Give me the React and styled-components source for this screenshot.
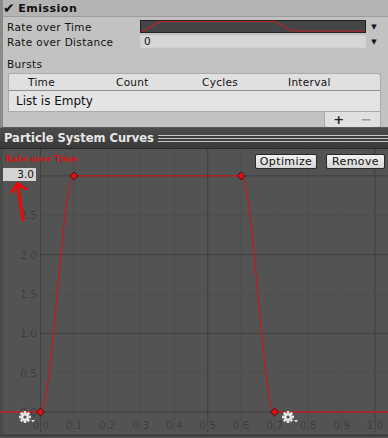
import React from 'react';
import styled, { createGlobalStyle } from 'styled-components';

const GlobalStyle = createGlobalStyle`
  html, body {
    margin: 0;
    padding: 0;
    background: #525252;
  }
  body {
    font-family: 'DejaVu Sans', Verdana, sans-serif;
    width: 388px;
    height: 438px;
    overflow: hidden;
  }
`;

const Inspector = styled.div`
  height: 127px;
  overflow: hidden;
  background: #c2c2c2;
  border-left: 3px solid #8a8a8a;
  border-bottom: 1px solid #5a5a5a;
  box-sizing: content-box;
  display: flex;
  flex-direction: column;
`;

const ModuleHeader = styled.div`
  height: 16px;
  flex-shrink: 0;
  display: flex;
  align-items: center;
  gap: 3px;
  padding-left: 0;
  background: #b4b4b4;
  border-bottom: 1px solid #9c9c9c;
  font-size: 11px;
  font-weight: bold;
  letter-spacing: 0.5px;
  color: #111;
`;

const Check = styled.span`
  font-size: 14px;
  line-height: 1;
`;

const Row = styled.div`
  height: 15px;
  flex-shrink: 0;
  display: flex;
  align-items: center;
  padding-left: 4px;
  font-size: 10.5px;
  color: #111;
  letter-spacing: 0.35px;
  margin-top: ${(p) => p.$top || 0}px;
`;

const Label = styled.div`
  width: 133px;
  white-space: nowrap;
`;

const Field = styled.div`
  width: 226px;
  height: 13px;
  box-sizing: border-box;
  background: ${(p) => (p.$dark ? '#434546' : '#d6d6d6')};
  border: 1px solid ${(p) => (p.$dark ? '#222' : '#d0d0d0')};
  font-size: 10.5px;
  line-height: 11px;
  padding-left: 3px;
  position: relative;
  overflow: hidden;
`;

const Arrow = styled.div`
  width: 16px;
  text-align: center;
  font-size: 7px;
  color: #111;
`;

const BurstsLabel = styled.div`
  flex-shrink: 0;
  font-size: 10.5px;
  line-height: 10px;
  color: #111;
  padding: 10px 0 0 4px;
  height: 10px;
  letter-spacing: 0.35px;
`;

const Table = styled.div`
  margin: 4px 7px 0 5px;
  display: flex;
  flex-direction: column;
`;

const TableHeader = styled.div`
  height: 16px;
  display: grid;
  grid-template-columns: 19px 88px 86px 86px 1fr;
  align-items: center;
  background: #e0e0e0;
  border: 1px solid #ababab;
  border-bottom: 1px solid #8f8f8f;
  border-radius: 3px 3px 0 0;
  font-size: 10.5px;
  color: #111;
  letter-spacing: 0.3px;
`;

const TableBody = styled.div`
  height: 20px;
  display: flex;
  align-items: center;
  padding-left: 7px;
  background: #e4e4e4;
  border: 1px solid #ababab;
  border-top: none;
  font-size: 12px;
  color: #111;
`;

const Footer = styled.div`
  display: flex;
  justify-content: flex-end;
`;

const FooterBox = styled.div`
  width: 55px;
  height: 15px;
  display: flex;
  align-items: center;
  justify-content: space-around;
  background: #e0e0e0;
  border: 1px solid #ababab;
  border-top: none;
  border-radius: 0 0 3px 3px;
  font-size: 13px;
  font-weight: bold;
`;

const Sign = styled.span`
  color: ${(p) => p.$color};
  line-height: 1;
`;

const TitleBar = styled.div`
  height: 20px;
  display: flex;
  align-items: center;
  gap: 4px;
  padding-left: 4px;
  background: linear-gradient(#4c4c4c, #3a3a3a);
  border-bottom: 1px solid #262626;
  font-size: 11.5px;
  font-weight: bold;
  color: #e8e8e8;
  letter-spacing: 0;
`;

const Grip = styled.div`
  flex: 1;
  height: 7px;
  background: repeating-linear-gradient(
    #c8c8c8 0px,
    #c8c8c8 1px,
    #3e3e3e 1px,
    #3e3e3e 3px
  );
`;

const Graph = styled.div`
  position: relative;
  height: 289px;
  background: #535353;
`;

const Plot = styled.svg`
  position: absolute;
  inset: 0;
  display: block;
`;

const CurveName = styled.div`
  position: absolute;
  left: 5px;
  top: 5px;
  font-size: 8.5px;
  font-weight: bold;
  color: #d01818;
`;

const ValueBox = styled.div`
  position: absolute;
  left: 3px;
  top: 19px;
  width: 33px;
  height: 13px;
  box-sizing: border-box;
  background: #d4d4d4;
  font-size: 10.5px;
  line-height: 13px;
  text-align: right;
  padding-right: 2px;
  color: #111;
`;

const Buttons = styled.div`
  position: absolute;
  right: 3px;
  top: 5px;
  display: flex;
  gap: 9px;
`;

const Button = styled.div`
  width: ${(p) => p.$w}px;
  height: 15px;
  box-sizing: border-box;
  background: linear-gradient(#f2f2f2, #d6d6d6);
  border: 1px solid #2a2a2a;
  border-radius: 2px;
  font-size: 11px;
  line-height: 13px;
  text-align: center;
  color: #111;
  letter-spacing: 0.4px;
`;

const X0 = 40.5;
const XS = 334.5;
const Y0 = 411;
const YS = 78.7;
const px = (v) => X0 + v * XS;
const py = (v) => Y0 - v * YS;

const Gear = ({ x, y }) => (
  <g transform={`translate(${x} ${y})`} fill="#e4e4e4">
    <circle r="4" />
    {[0, 45, 90, 135, 180, 225, 270, 315].map((a) => (
      <rect key={a} x="-1.3" y="-6" width="2.6" height="3" transform={`rotate(${a})`} />
    ))}
    <circle r="1.6" fill="#535353" />
    <path d="M6 3 L10 3 L8 5.5 Z" />
  </g>
);

function CurvePlot() {
  const xs = Array.from({ length: 11 }, (_, i) => i / 10);
  const ys = [0, 0.5, 1, 1.5, 2, 2.5, 3];
  const keys = [
    [0, 0],
    [0.1, 3],
    [0.6, 3],
    [0.7, 0],
  ];
  const d = `M0 ${py(0)} L${px(0)} ${py(0)} C${px(0.035)} ${py(0)} ${px(0.065)} ${py(3)} ${px(0.1)} ${py(3)} L${px(0.6)} ${py(3)} C${px(0.635)} ${py(3)} ${px(0.665)} ${py(0)} ${px(0.7)} ${py(0)} L388 ${py(0)}`;
  return (
    <Plot width="388" height="289" viewBox="0 148 388 289">
      {xs.map((v, i) => (
        <line
          key={'vx' + i}
          x1={px(v)}
          x2={px(v)}
          y1="148"
          y2="432"
          stroke={i % 5 === 0 ? '#414141' : '#4e4e4e'}
          strokeWidth="1"
        />
      ))}
      {ys.map((v, i) => (
        <line
          key={'hy' + i}
          x1="40"
          x2="388"
          y1={py(v)}
          y2={py(v)}
          stroke={i % 2 === 0 ? '#414141' : '#4e4e4e'}
        />
      ))}
      <line x1="0" x2="388" y1="434.5" y2="434.5" stroke="#3c3c3c" strokeWidth="2" />
      <rect x="0" y="148" width="3" height="286" fill="#4a4a4a" />
      <g fontFamily="DejaVu Sans, sans-serif" fontSize="10.5" fill="#3a3a3a">
        {ys.slice(0, 6).map((v) => (
          <text key={'ly' + v} x="37" y={py(v) + 4} textAnchor="end" stroke="#5e5e5e" strokeWidth="0.6" paintOrder="stroke">
            {v.toFixed(1)}
          </text>
        ))}
        {xs.map((v) => (
          <text key={'lx' + v} x={px(v)} y="428" textAnchor="middle" stroke="#5e5e5e" strokeWidth="0.6" paintOrder="stroke">
            {v.toFixed(1)}
          </text>
        ))}
      </g>
      <path d={d} fill="none" stroke="#c41c1c" strokeWidth="1.3" />
      {keys.map(([kx, ky]) => (
        <rect
          key={kx}
          x={px(kx) - 2.8}
          y={py(ky) - 2.8}
          width="5.6"
          height="5.6"
          fill="#e01010"
          stroke="#3a0a0a"
          strokeWidth="0.8"
          transform={`rotate(45 ${px(kx)} ${py(ky)})`}
        />
      ))}
      <Gear x={25} y={416} />
      <Gear x={288} y={416} />
      <path d="M23 219 C21 205 19 195 18 184" fill="none" stroke="#f00808" strokeWidth="3" strokeLinecap="round" />
      <path d="M12 191 L17.5 182.5 L26 188" fill="none" stroke="#f00808" strokeWidth="3" strokeLinecap="round" strokeLinejoin="round" />
    </Plot>
  );
}

export default function App() {
  return (
    <>
      <GlobalStyle />
      <Inspector>
        <ModuleHeader>
          <Check>✔</Check>
          Emission
        </ModuleHeader>
        <Row $top={2}>
          <Label>Rate over Time</Label>
          <Field $dark>
            <svg width="226" height="13" style={{ position: 'absolute', left: -1, top: -1 }}>
              <path d="M0 13 L20 1.5 L135 1.5 L152 11 L226 11" fill="none" stroke="#c0202a" strokeWidth="1.2" />
            </svg>
          </Field>
          <Arrow>▼</Arrow>
        </Row>
        <Row>
          <Label>Rate over Distance</Label>
          <Field>0</Field>
          <Arrow>▼</Arrow>
        </Row>
        <BurstsLabel>Bursts</BurstsLabel>
        <Table>
          <TableHeader>
            <span />
            <span>Time</span>
            <span>Count</span>
            <span>Cycles</span>
            <span>Interval</span>
          </TableHeader>
          <TableBody>List is Empty</TableBody>
          <Footer>
            <FooterBox>
              <Sign $color="#222">+</Sign>
              <Sign $color="#999">−</Sign>
            </FooterBox>
          </Footer>
        </Table>
      </Inspector>
      <TitleBar>
        Particle System Curves
        <Grip />
      </TitleBar>
      <Graph>
        <CurvePlot />
        <CurveName>Rate over Time</CurveName>
        <ValueBox>3.0</ValueBox>
        <Buttons>
          <Button $w={62}>Optimize</Button>
          <Button $w={59}>Remove</Button>
        </Buttons>
      </Graph>
    </>
  );
}
